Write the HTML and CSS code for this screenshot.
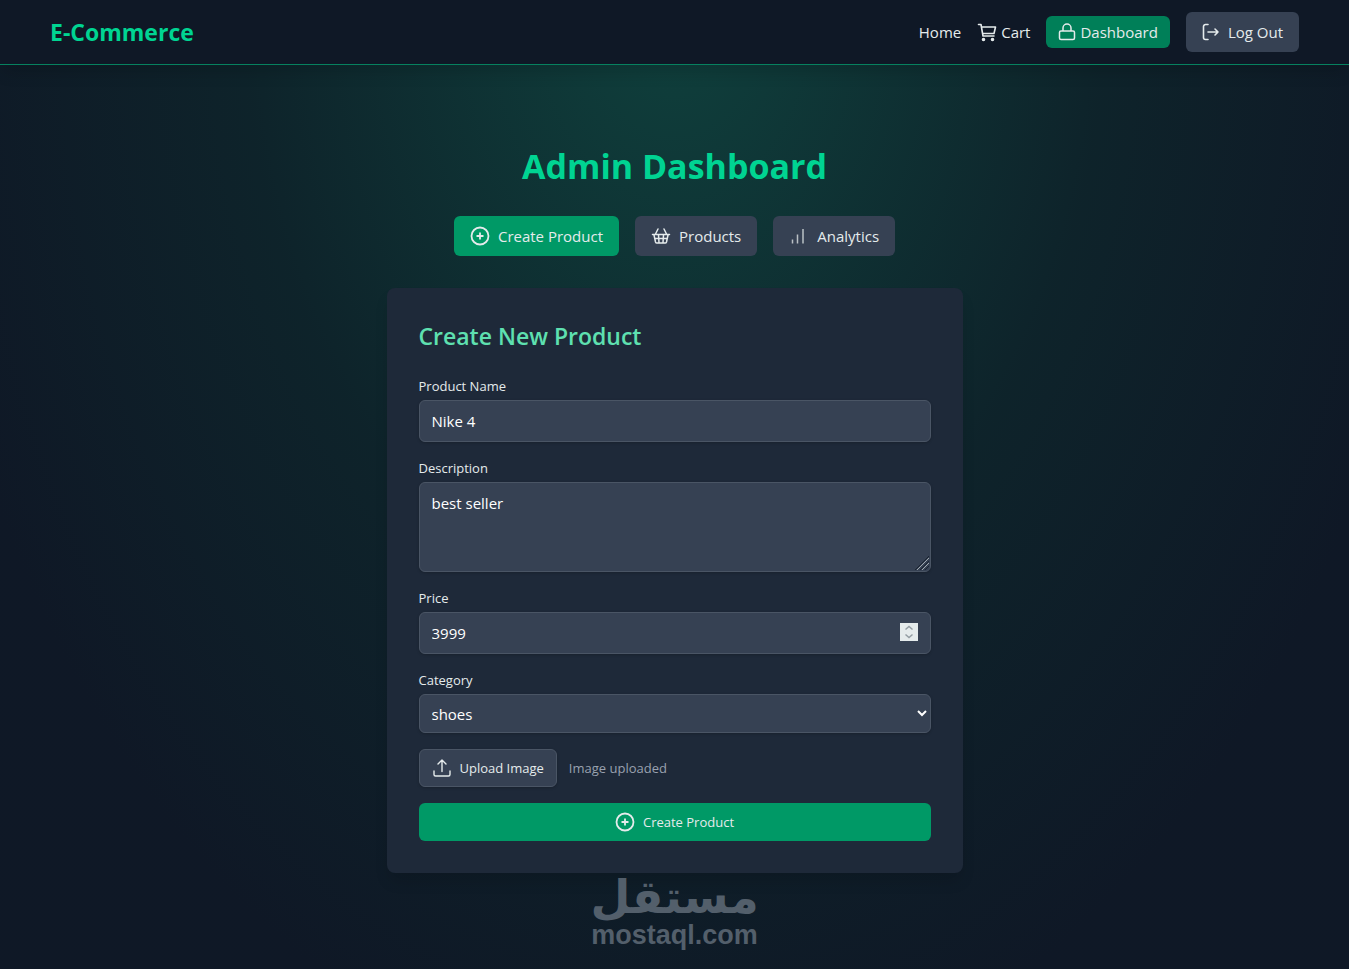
FILE: index.html
```html
<!DOCTYPE html>
<html lang="en">
<head>
  <meta charset="UTF-8">
  <meta name="viewport" content="width=device-width, initial-scale=1.0">
  <title>E-Commerce</title>
  <link rel="stylesheet" href="styles.css">
</head>
<body>
  <header class="header">
    <a href="#" class="brand">E-Commerce</a>
    <nav class="nav">
      <a href="#" class="nav-link">Home</a>
      <a href="#" class="nav-link">
        <svg class="icon" viewBox="0 0 20 20" fill="none" stroke="currentColor" stroke-width="1.6" stroke-linecap="round" stroke-linejoin="round">
          <path d="M1.500 2.500h2.500l2 11.500h11M4.500 5h14l-1.500 6.500H5.700"/>
          <circle cx="6.500" cy="17.500" r="1" fill="currentColor"/>
          <circle cx="15.500" cy="17.500" r="1" fill="currentColor"/>
        </svg>
        Cart
      </a>
      <a href="#" class="nav-link nav-dashboard">
        <svg class="icon icon-sm" viewBox="0 0 18 18" fill="none" stroke="currentColor" stroke-width="1.5" stroke-linejoin="round">
          <rect x="1.500" y="8" width="15" height="8.500" rx="1.500"/>
          <path d="M5 8V5a4 4 0 0 1 8 0v3"/>
        </svg>
        Dashboard
      </a>
      <button class="btn">
        <svg class="icon icon-sm" viewBox="0 0 18 18" fill="none" stroke="currentColor" stroke-width="1.6" stroke-linecap="round" stroke-linejoin="round">
          <path d="M6 1.500H3.500a2 2 0 0 0-2 2v11a2 2 0 0 0 2 2H6"/>
          <path d="M6 9h10M13 6l3 3-3 3"/>
        </svg>
        Log Out
      </button>
    </nav>
  </header>

  <main class="page">
    <h1 class="title">Admin Dashboard</h1>

    <div class="tabs">
      <button class="btn btn-active">
        <svg class="icon" viewBox="0 0 20 20" fill="none" stroke="currentColor" stroke-width="1.8">
          <circle cx="10" cy="10" r="8.500"/>
          <path d="M10 6.500v7M6.500 10h7"/>
        </svg>
        Create Product
      </button>
      <button class="btn">
        <svg class="icon" viewBox="0 0 20 20" fill="none" stroke="currentColor" stroke-width="1.5" stroke-linecap="round" stroke-linejoin="round">
          <path d="M1.500 8.500h17M3 9l1.500 7a1.500 1.500 0 0 0 1.500 1h8a1.500 1.500 0 0 0 1.500-1L17 9M4.500 8L7 3M15.500 8L13 3M4 12.500h12M7.500 9l.5 7.500M12.500 9l-.5 7.500"/>
        </svg>
        Products
      </button>
      <button class="btn">
        <svg class="icon icon-dim" viewBox="0 0 20 20" fill="none" stroke="currentColor" stroke-width="1.5">
          <path d="M3.500 13.500v4M8.500 8.500v9M14 3v14.500"/>
        </svg>
        Analytics
      </button>
    </div>

    <section class="card">
      <h2 class="card-title">Create New Product</h2>
      <form class="form">
        <div class="field">
          <label for="name">Product Name</label>
          <input type="text" id="name" value="Nike 4">
        </div>
        <div class="field">
          <label for="description">Description</label>
          <textarea id="description" rows="3">best seller</textarea>
        </div>
        <div class="field">
          <label for="price">Price</label>
          <input type="number" id="price" value="3999">
        </div>
        <div class="field">
          <label for="category">Category</label>
          <select id="category">
            <option>shoes</option>
          </select>
        </div>
        <div class="upload">
          <input type="file" id="image" class="file-input" accept="image/*">
          <label for="image" class="upload-btn">
            <svg class="icon" viewBox="0 0 20 20" fill="none" stroke="currentColor" stroke-width="1.4" stroke-linecap="round" stroke-linejoin="round">
              <path d="M2 13v3.500a1.500 1.500 0 0 0 1.500 1.500h13a1.500 1.500 0 0 0 1.500-1.500V13"/>
              <path d="M10 13.500V2.500M6 6l4-4 4 4"/>
            </svg>
            Upload Image
          </label>
          <span class="upload-note">Image uploaded</span>
        </div>
        <button type="submit" class="submit">
          <svg class="icon" viewBox="0 0 20 20" fill="none" stroke="currentColor" stroke-width="1.8">
            <circle cx="10" cy="10" r="8.500"/>
            <path d="M10 6.500v7M6.500 10h7"/>
          </svg>
          Create Product
        </button>
      </form>
    </section>

    <div class="watermark">
      <span class="watermark-ar" lang="ar" dir="rtl">مستقل</span>
      <span class="watermark-en">mostaql.com</span>
    </div>
  </main>
</body>
</html>
```
FILE: styles.css
```css
* {
  box-sizing: border-box;
}
body {
  margin: 0;
  min-height: 100vh;
  background: radial-gradient(ellipse at top, rgba(16, 185, 129, 0.25) 0%, rgba(10, 80, 60, 0.2) 45%, rgba(14, 24, 38, 0.1) 80%) #0f1826;
  color: #e5ebec;
  font-family: "Segoe UI", "Open Sans", sans-serif;
  font-size: 15px;
  line-height: 24px;
}
h1, h2 {
  margin: 0;
}
button, input, textarea, select {
  font: inherit;
  color: inherit;
}
.icon {
  width: 20px;
  height: 20px;
  flex: none;
}
.icon-sm {
  width: 18px;
  height: 18px;
}
.icon-dim {
  opacity: 0.75;
}

/* header */
.header {
  display: flex;
  align-items: center;
  justify-content: space-between;
  height: 65px;
  padding: 0 50px;
  background: #0f1826;
  border-bottom: 1px solid #06815f;
  box-shadow: 0 10px 15px -3px rgba(0, 0, 0, 0.15);
}
.brand {
  color: #00d492;
  font-size: 23px;
  font-weight: 700;
  line-height: 32px;
  text-decoration: none;
}
.nav {
  display: flex;
  align-items: center;
  gap: 16px;
}
.nav-link {
  display: flex;
  align-items: center;
  gap: 4px;
  color: inherit;
  text-decoration: none;
}
.nav-dashboard {
  padding: 4px 12px;
  border-radius: 6px;
  background: #007f58;
}
.btn {
  display: flex;
  align-items: center;
  gap: 8px;
  padding: 8px 16px;
  border: 0;
  border-radius: 6px;
  background: #364153;
  cursor: pointer;
}
.btn-active {
  background: #009966;
}

/* page */
.page {
  padding: 79px 16px 16px;
}
.title {
  color: #00d492;
  font-size: 34px;
  line-height: 44px;
  text-align: center;
}
.tabs {
  display: flex;
  justify-content: center;
  gap: 16px;
  margin: 28px 0 32px;
}

/* form */
.card {
  max-width: 576px;
  margin: 0 auto;
  padding: 32px;
  border-radius: 8px;
  background: #1e2939;
  box-shadow: 0 10px 15px -3px rgba(0, 0, 0, 0.15);
}
.card-title {
  margin-bottom: 24px;
  color: #5ee0b0;
  font-size: 23px;
  font-weight: 600;
  line-height: 32px;
}
.form {
  display: flex;
  flex-direction: column;
  gap: 16px;
  font-size: 13px;
  line-height: 20px;
}
.field {
  display: flex;
  flex-direction: column;
  gap: 4px;
}
.field input, .field textarea, .field select {
  width: 100%;
  padding: 8px 12px;
  border: 1px solid #4a5565;
  border-radius: 6px;
  background: #364153;
  box-shadow: 0 1px 3px rgba(0, 0, 0, 0.2);
  color: #fff;
  font-size: 15px;
  line-height: 24px;
}
.field input {
  height: 42px;
}
.field select {
  height: 39px;
  padding: 0 8px;
}
.field textarea::-webkit-resizer {
  background: url("data:image/svg+xml,%3Csvg xmlns='http://www.w3.org/2000/svg' viewBox='0 0 15 15' fill='none'%3E%3Cpath d='M0 14L14 0M5 14l9-9M10 14l4-4' stroke='%231b2432'/%3E%3Cpath d='M2 14L14 2M7 14l7-7' stroke='%23a0a8ae'/%3E%3C/svg%3E");
}
.field input::-webkit-inner-spin-button {
  appearance: none;
  width: 18px;
  height: 18px;
  opacity: 1;
  background: #e5ebec url("data:image/svg+xml,%3Csvg xmlns='http://www.w3.org/2000/svg' viewBox='0 0 18 18' fill='none' stroke='%23949da3' stroke-width='1.5'%3E%3Cpath d='M5.500 6.500L9 3.500l3.500 3M5.500 11.500l3.500 3 3.500-3'/%3E%3C/svg%3E");
}
.upload {
  display: flex;
  align-items: center;
  gap: 12px;
  position: relative;
}
.file-input {
  position: absolute;
  width: 1px;
  height: 1px;
  opacity: 0;
}
.upload-btn {
  display: flex;
  align-items: center;
  gap: 8px;
  padding: 8px 12px;
  border: 1px solid #4a5565;
  border-radius: 6px;
  background: #364153;
  box-shadow: 0 1px 3px rgba(0, 0, 0, 0.2);
  cursor: pointer;
}
.upload-note {
  color: #99a1af;
}
.submit {
  display: flex;
  align-items: center;
  justify-content: center;
  gap: 8px;
  height: 38px;
  border: 0;
  border-radius: 6px;
  background: #009966;
  cursor: pointer;
}

/* watermark */
.watermark {
  display: flex;
  flex-direction: column;
  align-items: center;
  color: #535f6b;
  font-weight: 700;
}
.watermark-ar {
  font-family: "DejaVu Sans", sans-serif;
  font-size: 46px;
  line-height: 48px;
}
.watermark-en {
  font-family: "Liberation Sans", Arial, sans-serif;
  font-size: 27px;
  line-height: 28px;
}
```
